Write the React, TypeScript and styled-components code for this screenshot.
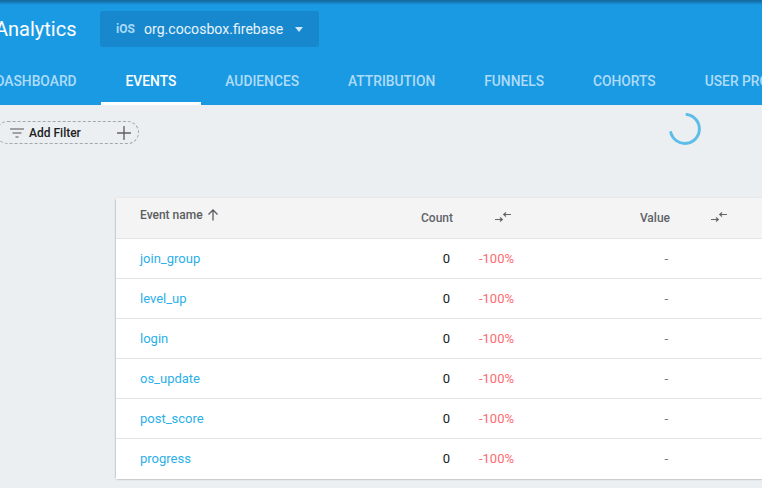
import styled, { createGlobalStyle } from "styled-components";
import { Plus } from "lucide-react";

const events = ["join_group", "level_up", "login", "os_update", "post_score", "progress"];
const tabs = ["DASHBOARD", "EVENTS", "AUDIENCES", "ATTRIBUTION", "FUNNELS", "COHORTS", "USER PROPERTIES"];

const GlobalStyle = createGlobalStyle`
  html, body {
    margin: 0;
    padding: 0;
    background: #ebeff2;
    font-family: Roboto, "Liberation Sans", sans-serif;
  }
  * {
    box-sizing: border-box;
  }
`;

const Page = styled.div`
  position: relative;
  width: 762px;
  height: 488px;
  overflow: hidden;
  background: #ebeff2;
`;

const Header = styled.header`
  height: 105px;
  background: linear-gradient(#14699e 0, #1678b4 2px, #1b9ae4 5px);
  display: flex;
  flex-direction: column;
`;

const TopRow = styled.div`
  height: 57px;
  padding-top: 11px;
  margin-left: -5px;
  display: flex;
  align-items: flex-start;
`;

const Brand = styled.div`
  width: 105px;
  height: 36px;
  line-height: 36px;
  font-size: 20px;
  color: #fff;
`;

const ProjectPicker = styled.div`
  width: 219px;
  height: 36px;
  padding-left: 16px;
  background: #1888ce;
  border-radius: 2px;
  display: flex;
  align-items: center;
  color: #e6f4fd;
  font-size: 14.1px;
`;

const PlatformBadge = styled.span`
  width: 28px;
  font-size: 12px;
  font-weight: 700;
  color: #a9daf7;
`;

const ProjectName = styled.span`
  width: 151px;
  white-space: nowrap;
`;

const Caret = styled.span`
  width: 0;
  height: 0;
  border-left: 4.5px solid transparent;
  border-right: 4.5px solid transparent;
  border-top: 5px solid #cfe9fa;
`;

const TabBar = styled.nav`
  flex: 1;
  margin-left: -29px;
  display: flex;
  white-space: nowrap;
`;

const Tab = styled.div<{ $active?: boolean }>`
  padding: 0 24.5px;
  height: 48px;
  line-height: 49px;
  font-size: 13.8px;
  font-weight: 500;
  color: ${(props) => (props.$active ? "#fff" : "#aedcf8")};
  border-bottom: 3px solid ${(props) => (props.$active ? "#fff" : "transparent")};
`;

const FilterRow = styled.div`
  margin: 16px 0 0 -4px;
`;

const FilterChip = styled.div`
  width: 143px;
  height: 23px;
  padding: 0 3px 0 13px;
  border: 1px dashed #a3a7aa;
  border-radius: 12px;
  display: flex;
  align-items: center;
  color: #212121;
  font-size: 12px;
  font-weight: 500;
`;

const FilterLabel = styled.span`
  flex: 1;
  margin-left: 5px;
`;

const Spinner = styled.svg`
  position: absolute;
  left: 667px;
  top: 111px;
`;

const Table = styled.section`
  width: 700px;
  height: 280px;
  margin: 54px 0 0 116px;
  background: #fff;
  border-radius: 2px;
  box-shadow: 0 1px 2px rgba(0, 0, 0, 0.5);
`;

const Row = styled.div<{ $head?: boolean }>`
  height: ${(props) => (props.$head ? "41px" : "40px")};
  padding-left: 24px;
  display: grid;
  grid-template-columns: 240px 73px 61px 156px 60px;
  align-items: center;
  background: ${(props) => (props.$head ? "#f4f4f4" : "#fff")};
  border-bottom: 1px solid #e3e4e5;
  &:last-child {
    border-bottom-color: transparent;
  }
`;

const HeadCell = styled.div`
  padding-bottom: 1px;
  text-align: right;
  font-size: 12px;
  font-weight: 500;
  color: #5f6368;
`;

const NameHead = styled(HeadCell)`
  padding: 0 0 7px;
  display: flex;
  align-items: center;
  gap: 4px;
  text-align: left;
  color: #5a5d60;
`;

const CompareHead = styled.div`
  display: flex;
  justify-content: flex-end;
  padding: 0 3px 2px 0;
`;

const NameCell = styled.div`
  line-height: 15px;
  padding-bottom: 1px;
`;

const EventLink = styled.a`
  font-size: 13px;
  color: #2bb0ea;
  text-decoration: none;
`;

const CountCell = styled.div`
  padding-right: 3px;
  text-align: right;
  font-size: 13px;
  color: #212121;
`;

const ChangeCell = styled.div`
  text-align: right;
  font-size: 13px;
  color: #fd6a70;
`;

const ValueCell = styled.div`
  padding-right: 2px;
  text-align: right;
  font-size: 13px;
  color: #757575;
`;

function CompareIcon() {
  return (
    <svg width="16" height="10" viewBox="0 0 16 10" fill="none" stroke="#666" strokeWidth="1.2">
      <path d="M0 7.5H7M5 5.5L7.3 7.5L5 9.5" />
      <path d="M16 2.5H9M11 .5L8.7 2.5L11 4.5" />
    </svg>
  );
}

function FilterIcon() {
  return (
    <svg width="14" height="10" viewBox="0 0 14 10" fill="none" stroke="#555" strokeWidth="1.2">
      <path d="M0 1H14M2.5 5H11.5M5.5 9H8.5" />
    </svg>
  );
}

function SortArrow() {
  return (
    <svg width="12" height="12" viewBox="0 0 12 12" fill="none" stroke="#5a5d60" strokeWidth="1.3">
      <path d="M6 11.5V1M1.5 5.5L6 1L10.5 5.5" />
    </svg>
  );
}

export default function App() {
  return (
    <Page>
      <GlobalStyle />
      <Header>
        <TopRow>
          <Brand>Analytics</Brand>
          <ProjectPicker>
            <PlatformBadge>iOS</PlatformBadge>
            <ProjectName>org.cocosbox.firebase</ProjectName>
            <Caret />
          </ProjectPicker>
        </TopRow>
        <TabBar>
          {tabs.map((tab) => (
            <Tab key={tab} $active={tab === "EVENTS"}>
              {tab}
            </Tab>
          ))}
        </TabBar>
      </Header>
      <FilterRow>
        <FilterChip>
          <FilterIcon />
          <FilterLabel>Add Filter</FilterLabel>
          <Plus size={22} color="#616161" strokeWidth={1.5} />
        </FilterChip>
      </FilterRow>
      <Spinner width="36" height="36" viewBox="0 0 36 36" fill="none">
        <path
          d="M20 3.6A14.5 14.5 0 1 1 3.8 21.5"
          stroke="#5cbde8"
          strokeWidth="3"
          strokeLinecap="round"
        />
      </Spinner>
      <Table>
        <Row $head>
          <NameHead>
            Event name <SortArrow />
          </NameHead>
          <HeadCell>Count</HeadCell>
          <CompareHead>
            <CompareIcon />
          </CompareHead>
          <HeadCell>Value</HeadCell>
          <CompareHead>
            <CompareIcon />
          </CompareHead>
        </Row>
        {events.map((name) => (
          <Row key={name}>
            <NameCell>
              <EventLink>{name}</EventLink>
            </NameCell>
            <CountCell>0</CountCell>
            <ChangeCell>-100%</ChangeCell>
            <ValueCell>-</ValueCell>
            <div />
          </Row>
        ))}
      </Table>
    </Page>
  );
}
